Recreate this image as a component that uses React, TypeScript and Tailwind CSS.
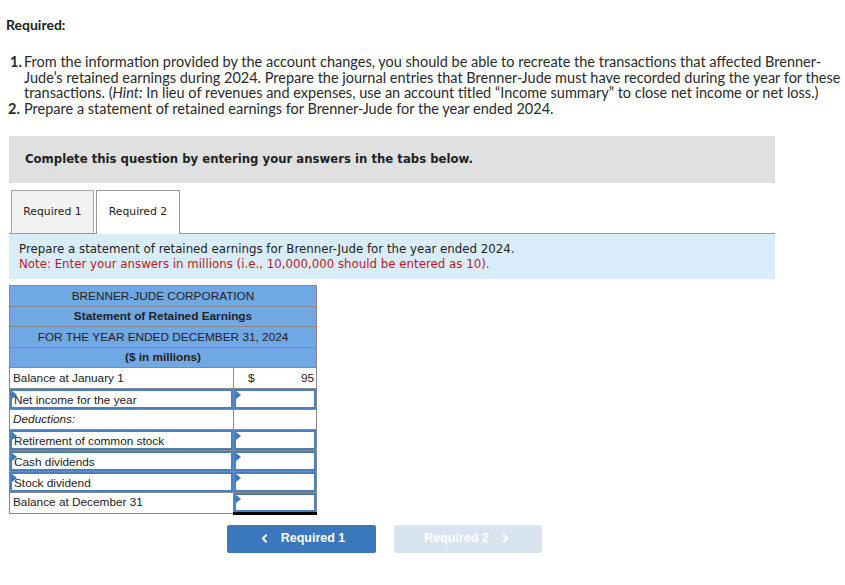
import { ChevronLeft, ChevronRight } from 'lucide-react';

const body = { fontFamily: 'Lato, "Open Sans", sans-serif' };
const verdana = { fontFamily: '"DejaVu Sans", Verdana, sans-serif' };
const arial = { fontFamily: '"Liberation Sans", Arial, sans-serif' };

function Marker() {
    return (
        <span className="absolute left-0 top-0 w-0 h-0 border-t-[4px] border-b-[4px] border-l-[5px] border-t-transparent border-b-transparent border-l-[#3b77bc]" />
    );
}

function InputCell({ label }: { label?: string }) {
    return (
        <div className="relative h-full border-2 border-[#4a7fbf]">
            <Marker />
            {label && <span className="absolute left-[2px] top-[1px] leading-[16px]">{label}</span>}
        </div>
    );
}

const headerRows = [
    { text: 'BRENNER-JUDE CORPORATION', bold: false },
    { text: 'Statement of Retained Earnings', bold: true },
    { text: 'FOR THE YEAR ENDED DECEMBER 31, 2024', bold: false },
    { text: '($ in millions)', bold: true },
];

type Row = { label: string; kind: 'plain' | 'select' | 'italic'; value?: 'given' | 'input' | 'none' | 'total' };

const rows: Row[] = [
    { label: 'Balance at January 1', kind: 'plain', value: 'given' },
    { label: 'Net income for the year', kind: 'select', value: 'input' },
    { label: 'Deductions:', kind: 'italic', value: 'none' },
    { label: 'Retirement of common stock', kind: 'select', value: 'input' },
    { label: 'Cash dividends', kind: 'select', value: 'input' },
    { label: 'Stock dividend', kind: 'select', value: 'input' },
    { label: 'Balance at December 31', kind: 'plain', value: 'total' },
];

export default function App() {
    return (
        <div className="w-[845px] h-[585px] bg-white text-[#222] relative">
            <div style={body} className="pt-[17px]">
                <h3 className="pl-[6px] text-[14px] font-bold leading-[16px] text-[#222]">Required:</h3>
                <ol className="mt-[21px] text-[14.5px] leading-[15.5px] text-[#2a2a2a] whitespace-nowrap">
                    <li className="flex">
                        <span className="w-[24px] pl-[10px] font-bold shrink-0">1.</span>
                        <span>
                            From the information provided by the account changes, you should be able to recreate the transactions that affected Brenner-
                            <br />
                            Jude’s retained earnings during 2024. Prepare the journal entries that Brenner-Jude must have recorded during the year for these
                            <br />
                            transactions. (<i>Hint:</i> In lieu of revenues and expenses, use an account titled “Income summary” to close net income or net loss.)
                        </span>
                    </li>
                    <li className="flex">
                        <span className="w-[24px] pl-[8px] font-bold shrink-0">2.</span>
                        <span>Prepare a statement of retained earnings for Brenner-Jude for the year ended 2024.</span>
                    </li>
                </ol>
            </div>

            <div className="ml-[9px] w-[766px]" style={verdana}>
                <div className="mt-[20px] h-[47px] bg-[#e0e0e0] flex items-center pl-[16px] text-[11.7px] font-bold text-[#222]">
                    Complete this question by entering your answers in the tabs below.
                </div>

                <div className="mt-[7px] flex items-end h-[44px] border-b border-[#999]">
                    <div className="ml-[2px] w-[83px] h-[43px] bg-[#f2f2f2] border border-b-0 border-[#a8a8a8] flex items-center justify-center text-[10.8px] text-[#222]">
                        Required 1
                    </div>
                    <div className="ml-[2px] w-[84px] h-[44px] -mb-px bg-white border border-b-0 border-[#999] flex items-center justify-center text-[10.8px] text-[#222]">
                        Required 2
                    </div>
                </div>

                <div className="h-[45px] bg-[#d9ecf9] pl-[10px] pt-[8px] text-[11.8px] leading-[15px]">
                    <p className="text-[#222]">Prepare a statement of retained earnings for Brenner-Jude for the year ended 2024.</p>
                    <p className="text-[#c4161c]">Note: Enter your answers in millions (i.e., 10,000,000 should be entered as 10).</p>
                </div>
            </div>

            <table style={arial} className="ml-[9px] mt-[6px] w-[307px] border-collapse text-[11.8px] text-[#222] table-fixed">
                <colgroup>
                    <col className="w-[224px]" />
                    <col className="w-[83px]" />
                </colgroup>
                <thead>
                    {headerRows.map((h) => (
                        <tr key={h.text} className="h-[20.5px]">
                            <th colSpan={2} className={`bg-[#6fa8e2] border border-[#888] p-0 text-center leading-[18px] ${h.bold ? 'font-bold' : 'font-normal'}`}>
                                {h.text}
                            </th>
                        </tr>
                    ))}
                </thead>
                <tbody>
                    {rows.map((r) => (
                        <tr key={r.label} className="h-[20.8px]">
                            <td className="border border-[#888] p-0 h-[20.8px]">
                                {r.kind === 'select' ? (
                                    <InputCell label={r.label} />
                                ) : (
                                    <span className={`pl-[3px] leading-[18px] ${r.kind === 'italic' ? 'italic' : ''}`}>{r.label}</span>
                                )}
                            </td>
                            <td className={`p-0 h-[20.8px] border border-[#888] ${r.value === 'total' ? 'border-b-black border-b-[3px]' : ''}`}>
                                {r.value === 'given' && (
                                    <div className="flex justify-between pl-[14px] pr-[2px] leading-[18px]">
                                        <span>$</span>
                                        <span>95</span>
                                    </div>
                                )}
                                {(r.value === 'input' || r.value === 'total') && <InputCell />}
                            </td>
                        </tr>
                    ))}
                </tbody>
            </table>

            <div style={arial} className="mt-[10px] ml-[227px] flex gap-[18px]">
                <button className="w-[149px] h-[28px] rounded-[2px] bg-[#3b77bc] text-white text-[12.5px] font-bold flex items-center justify-center gap-[10px]">
                    <ChevronLeft size={13} strokeWidth={3.5} />
                    Required 1
                </button>
                <button className="w-[148px] h-[28px] rounded-[2px] bg-[#d9e4f1] text-white text-[12.5px] font-bold flex items-center justify-center gap-[10px]">
                    Required 2
                    <ChevronRight size={13} strokeWidth={3.5} />
                </button>
            </div>
        </div>
    );
}
